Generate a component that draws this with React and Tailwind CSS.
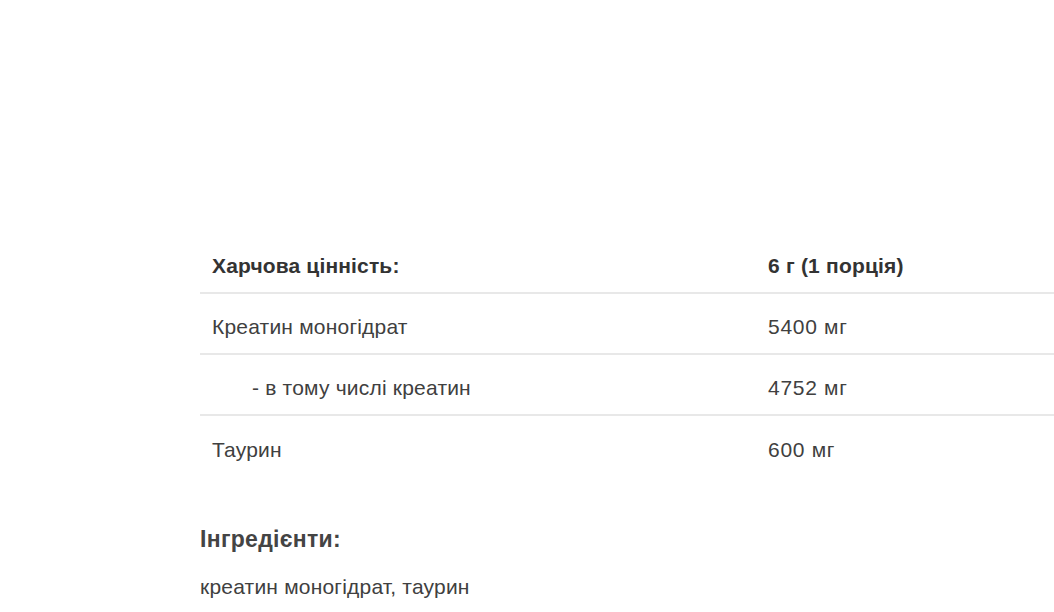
export default function App() {
  const rows = [
    { name: "Креатин моногідрат", value: "5400 мг", indent: false },
    { name: "- в тому числі креатин", value: "4752 мг", indent: true },
    { name: "Таурин", value: "600 мг", indent: false, last: true },
  ];
  return (
    <div
      className="w-[1054px] h-[612px] overflow-hidden bg-white text-[#404040]"
      style={{ fontFamily: '"Liberation Sans", Arial, sans-serif' }}
    >
      <div className="pt-[233px] pl-[200px]">
        <div className="w-[900px]">
          <div className="flex items-center h-[61px] pt-[6px] border-b-2 border-[#e8e8e8] text-[21px] tracking-[0.15px] font-bold text-[#333]">
            <div className="w-[568px] pl-3">Харчова цінність:</div>
            <div className="tracking-[0.2px]">6 г (1 порція)</div>
          </div>
          {rows.map((r) => (
            <div
              key={r.name}
              className={
                "flex items-center h-[61px] pt-[6px] text-[21px] tracking-[0.2px] " +
                (r.last ? "" : "border-b-2 border-[#e8e8e8]")
              }
            >
              <div className={r.indent ? "w-[568px] pl-[52px]" : "w-[568px] pl-3"}>{r.name}</div>
              <div className="tracking-[0.7px]">{r.value}</div>
            </div>
          ))}
        </div>
        <div className="mt-[48px] text-[23px] tracking-[0.3px] font-bold text-[#444] leading-[28px]">Інгредієнти:</div>
        <div className="mt-[22px] text-[21px] tracking-[0.2px] leading-[24px]">креатин моногідрат, таурин</div>
      </div>
    </div>
  );
}
